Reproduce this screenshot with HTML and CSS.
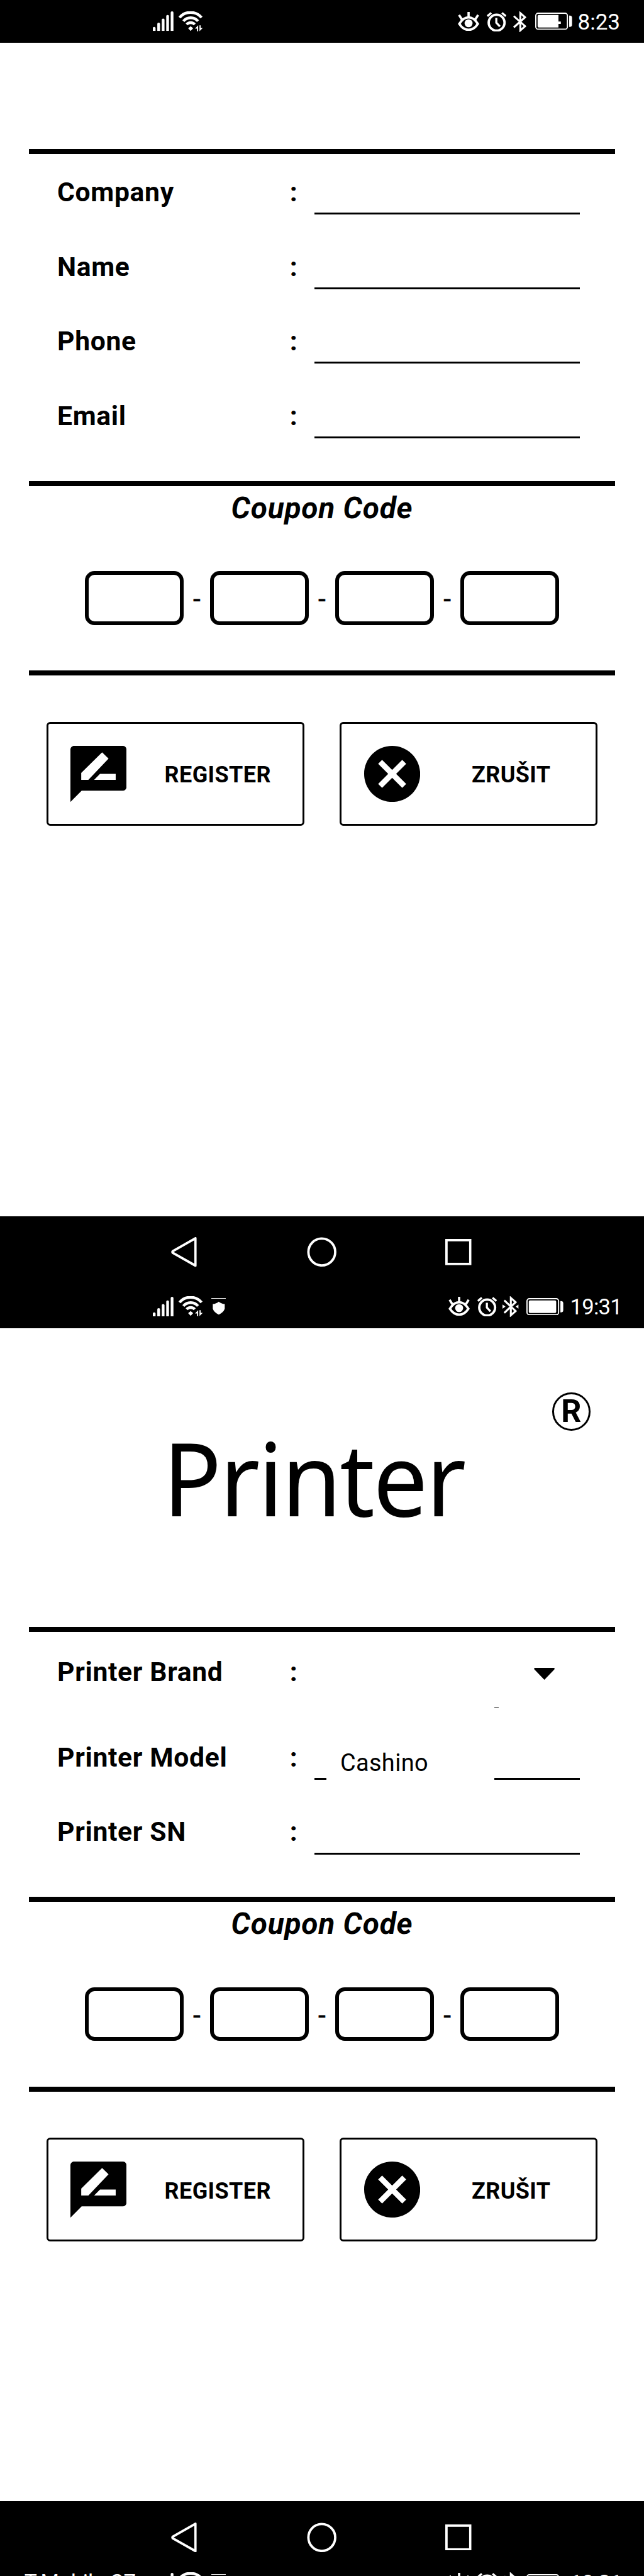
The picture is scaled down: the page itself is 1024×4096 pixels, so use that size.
FILE: index.html
```html
<!DOCTYPE html>
<html lang="cs">
<head>
<meta charset="utf-8">
<title>Printer registration</title>
<link rel="stylesheet" href="styles.css">
</head>
<body>
<svg class="defs" width="0" height="0">
  <symbol id="signal" viewBox="0 0 35 33"><path fill="#fff" d="M0 28q0-2 2.3-2t2.3 2v5H0zM7.5 21q0-2 2.3-2t2.3 2v12H7.500zM15 14q0-2 2.300-2t2.300 2v19H15zM22.500 8q0-2 2.300-2t2.300 2v25h-4.600zM30 2q0-2 2.300-2t2.300 2v31H30z"/></symbol>
  <symbol id="wifi" viewBox="0 0 41 34"><g fill="none" stroke="#fff" stroke-width="4.600"><path d="M1.500 10.500a24 24 0 0 1 37 0"/><path d="M8 16.500a16 16 0 0 1 24.500 0"/><path d="M13.500 22a9 9 0 0 1 13.500 0"/></g><path fill="#fff" d="M16 28.500l4.200-3.500 4.200 3.500-4.200 4.500zM27.500 29l5.300-5.500v10h-2V29zM35 23.500h2V28h3.500L35 33.500z"/></symbol>
  <symbol id="shield" viewBox="0 0 25 28"><path fill="#fff" d="M0 0h25v1H0zM12.500 6q4 3.500 10 4v8q-2 6-10 10-8-4-10-10v-8q6-.5 10-4z"/></symbol>
  <symbol id="eye" viewBox="0 0 36 32"><path fill="none" stroke="#fff" stroke-width="4" d="M2.500 20Q9 9 18 9t15.500 11Q27 30 18 30T2.500 20z"/><circle cx="18" cy="19" r="6.700" fill="#fff"/><path fill="none" stroke="#fff" stroke-width="3.800" d="M18 0v10M2 5l5 8M34 5l-5 8"/></symbol>
  <symbol id="alarm" viewBox="0 0 33 33"><circle cx="16.500" cy="18" r="13.300" fill="none" stroke="#fff" stroke-width="4"/><path fill="none" stroke="#fff" stroke-width="3.500" d="M16 10v8l6 6.500M1 7l6.500-5.500M32 7l-6.500-5.500"/></symbol>
  <symbol id="bluetooth" viewBox="0 0 22 35"><path fill="none" stroke="#fff" stroke-width="3.300" d="M1 8l19 17-8 7V3l8 7L1 27"/></symbol>
  <symbol id="bluetooth-on" viewBox="0 0 27 35"><path fill="none" stroke="#fff" stroke-width="3.300" d="M3 7l19 18-8 7V3l8 7L3 28"/><path fill="#fff" d="M0 14l5 3.500L0 21zM27 14l-5 3.500 5 3.500z"/></symbol>
  <symbol id="battery" viewBox="0 0 62 29"><rect x="1" y="1" width="53" height="27" rx="4" fill="none" stroke="#fff" stroke-width="2"/><rect x="4" y="4" width="46" height="21" rx="2" fill="#fff"/><path fill="#fff" d="M57 5h1q4 0 4 4v11q0 4-4 4h-1z"/></symbol>
  <symbol id="battery-charging" viewBox="0 0 62 29"><rect x="1" y="1" width="53" height="27" rx="4" fill="none" stroke="#fff" stroke-width="2"/><path fill="#fff" d="M6 4h33v11h4v4h-4v6H6q-2 0-2-2V6q0-2 2-2z"/><path fill="#fff" d="M57 5h1q4 0 4 4v11q0 4-4 4h-1z"/></symbol>
  <symbol id="back" viewBox="0 0 43 50"><path fill="none" stroke="#fff" stroke-width="4" stroke-linejoin="round" d="M41 2v46L3 26.500q-1.500-1.500 0-3z"/></symbol>
  <symbol id="home" viewBox="0 0 50 50"><circle cx="25" cy="25" r="22.500" fill="none" stroke="#fff" stroke-width="4"/></symbol>
  <symbol id="recent" viewBox="0 0 44 44"><rect x="2" y="2" width="40" height="40" fill="none" stroke="#fff" stroke-width="4"/></symbol>
  <symbol id="review" viewBox="2 2 20 20"><path fill="#000" fill-rule="evenodd" d="M20.700 2H3.300C2.600 2 2 2.600 2 3.300V22l4-4h14.700c.7 0 1.300-.6 1.300-1.300V3.300C22 2.600 21.400 2 20.700 2zM5.850 14.100v-2.450l7.450-7.350 2.300 2.250L8.400 14.100zm12.300 0h-7.700l2.100-2.100h5.600z"/></symbol>
  <symbol id="cancel" viewBox="2 2 20 20"><path fill="#000" d="M12 2C6.470 2 2 6.470 2 12s4.470 10 10 10 10-4.470 10-10S17.530 2 12 2zm5 13.590L15.590 17 12 13.410 8.410 17 7 15.590 10.590 12 7 8.410 8.410 7 12 10.590 15.590 7 17 8.410 13.410 12 17 15.590z"/></symbol>
</svg>

<main class="device">
  <section class="screen">
    <header class="status">
      <svg class="i-signal"><use href="#signal"/></svg>
      <svg class="i-wifi"><use href="#wifi"/></svg>
      <div class="status-right">
        <svg class="i-eye"><use href="#eye"/></svg>
        <svg class="i-alarm"><use href="#alarm"/></svg>
        <svg class="i-bt"><use href="#bluetooth"/></svg>
        <svg class="i-battery wide-gap"><use href="#battery-charging"/></svg>
        <span class="time time-short">8:23</span>
      </div>
    </header>
    <div class="content content-contact">
      <div class="form">
        <div class="row"><span class="label">Company</span><span class="colon">:</span><span class="field"></span></div>
        <div class="row"><span class="label">Name</span><span class="colon">:</span><span class="field"></span></div>
        <div class="row"><span class="label">Phone</span><span class="colon">:</span><span class="field"></span></div>
        <div class="row"><span class="label">Email</span><span class="colon">:</span><span class="field"></span></div>
      </div>
      <div class="coupon">
        <h2 class="coupon-title">Coupon Code</h2>
        <div class="code"><span class="box"></span><span class="dash">-</span><span class="box"></span><span class="dash">-</span><span class="box"></span><span class="dash">-</span><span class="box"></span></div>
      </div>
      <div class="actions">
        <div class="button"><svg class="i-action"><use href="#review"/></svg><span class="caption">REGISTER</span></div>
        <div class="button"><svg class="i-action"><use href="#cancel"/></svg><span class="caption">ZRUŠIT</span></div>
      </div>
    </div>
    <nav class="nav"><svg class="i-back"><use href="#back"/></svg><svg class="i-home"><use href="#home"/></svg><svg class="i-recent"><use href="#recent"/></svg></nav>
  </section>

  <section class="screen">
    <header class="status">
      <svg class="i-signal"><use href="#signal"/></svg>
      <svg class="i-wifi"><use href="#wifi"/></svg>
      <svg class="i-shield"><use href="#shield"/></svg>
      <div class="status-right">
        <svg class="i-eye"><use href="#eye"/></svg>
        <svg class="i-alarm"><use href="#alarm"/></svg>
        <svg class="i-bt-on"><use href="#bluetooth-on"/></svg>
        <svg class="i-battery"><use href="#battery"/></svg>
        <span class="time">19:31</span>
      </div>
    </header>
    <div class="content content-printer">
      <div class="brand">
        <h1 class="brand-name">Printer</h1>
        <span class="registered">R</span>
      </div>
      <div class="form form-printer">
        <div class="row row-brand"><span class="label">Printer Brand</span><span class="colon">:</span><span class="select"><svg class="i-caret" viewBox="0 0 35 20"><path d="M1.500 0h32q2.500 1 0 3.500L17.500 20 1.500 3.500q-2.500-2.500 0-3.500z"/></svg><span class="tick"></span></span></div>
        <div class="row"><span class="label">Printer Model</span><span class="colon">:</span><span class="field field-model"><span class="model">Cashino</span></span></div>
        <div class="row"><span class="label">Printer SN</span><span class="colon">:</span><span class="field"></span></div>
      </div>
      <div class="coupon">
        <h2 class="coupon-title">Coupon Code</h2>
        <div class="code"><span class="box"></span><span class="dash">-</span><span class="box"></span><span class="dash">-</span><span class="box"></span><span class="dash">-</span><span class="box"></span></div>
      </div>
      <div class="actions">
        <div class="button"><svg class="i-action"><use href="#review"/></svg><span class="caption">REGISTER</span></div>
        <div class="button"><svg class="i-action"><use href="#cancel"/></svg><span class="caption">ZRUŠIT</span></div>
      </div>
    </div>
    <nav class="nav nav-short"><svg class="i-back"><use href="#back"/></svg><svg class="i-home"><use href="#home"/></svg><svg class="i-recent"><use href="#recent"/></svg></nav>
  </section>

  <header class="status status-cut">
    <span class="carrier">T-Mobile CZ</span>
    <svg class="i-signal"><use href="#signal"/></svg>
    <svg class="i-wifi"><use href="#wifi"/></svg>
    <svg class="i-shield"><use href="#shield"/></svg>
    <div class="status-right">
      <svg class="i-eye"><use href="#eye"/></svg>
      <svg class="i-alarm"><use href="#alarm"/></svg>
      <svg class="i-bt-on"><use href="#bluetooth-on"/></svg>
      <svg class="i-battery"><use href="#battery"/></svg>
      <span class="time">19:31</span>
    </div>
  </header>
</main>
</body>
</html>
```
FILE: styles.css
```css
/* 1rem is 100 device pixels on a 1080-pixel-wide phone */
html { font-size: calc(100vw / 10.8); }
* { box-sizing: border-box; }
body { margin: 0; background: #fff; color: #000; font-family: Roboto, sans-serif; overflow: hidden; }
h1, h2 { margin: 0; }
svg { display: block; flex: none; }
.defs { position: absolute; }
.device { width: 10.8rem; height: 43.2rem; overflow: hidden; }

.status { display: flex; align-items: center; height: .72rem; padding-left: 2.56rem; background: #000; color: #fff; }
.status-right { display: flex; align-items: center; margin-left: auto; padding-right: .37rem; }
.i-signal { width: .35rem; height: .33rem; margin-right: .09rem; }
.i-wifi { width: .41rem; height: .34rem; }
.i-shield { width: .25rem; height: .28rem; margin-left: .13rem; }
.i-eye { width: .36rem; height: .32rem; margin-right: .12rem; }
.i-alarm { width: .33rem; height: .33rem; margin-right: .1rem; }
.i-bt { width: .22rem; height: .35rem; margin-left: .02rem; }
.i-bt-on { width: .27rem; height: .35rem; }
.i-battery { width: .62rem; height: .29rem; margin-left: .13rem; }
.i-battery.wide-gap { margin-left: .145rem; }
.time { width: .98rem; font-size: .365rem; line-height: .72rem; letter-spacing: -.008rem; text-align: right; margin-top: .02rem; }
.time-short { width: .835rem; padding-right: .03rem; font-size: .37rem; letter-spacing: 0; }

.content { height: 19.68rem; background: #fff; }
.content-contact { padding-top: 1.78rem; }
.form { margin: 0 .48rem; padding: 0 .48rem .48rem; border-top: .09rem solid #000; }
.form-printer { padding-top: .03rem; }
.row { display: flex; height: 1.25rem; }
.row-brand { height: 1.43rem; }
.label, .colon { font-size: .45rem; font-weight: 700; line-height: 1.28rem; white-space: nowrap; }
.label { width: 3.89rem; letter-spacing: .007rem; }
.colon { width: .42rem; padding-left: .01rem; }
.field { width: 4.45rem; height: 1.015rem; border-bottom: 3px solid #000; }
.field-model { display: flex; justify-content: space-between; align-items: flex-end; border: 0; }
.field-model::before, .field-model::after { content: ""; height: 3px; background: #000; }
.field-model::before { width: .2rem; }
.field-model::after { width: 1.43rem; }
.model { width: 2.56rem; padding-left: .105rem; font-size: .4rem; line-height: 1.46rem; height: 1.01rem; letter-spacing: .004rem; }
.select { display: flex; flex-direction: column; width: 4.45rem; height: 1.23rem; }
.i-caret { width: .35rem; height: .2rem; margin: .57rem 0 0 3.68rem; }
.tick { width: .07rem; height: 1px; background: #000; margin: .45rem 0 0 3.02rem; }

.coupon { margin: 0 .48rem; height: 3.26rem; border-top: .09rem solid #000; border-bottom: .09rem solid #000; }
.coupon-title { height: 1.43rem; font-size: .505rem; line-height: .75rem; letter-spacing: .008rem; font-style: italic; text-align: center; }
.code { display: flex; justify-content: center; height: .9rem; }
.box { width: 1.65rem; height: .9rem; border: 6px solid #000; border-radius: .16rem; }
.dash { width: .45rem; font-size: .45rem; line-height: .94rem; text-align: center; -webkit-text-stroke: .5px #000; }

.actions { display: flex; gap: .6rem; padding: .78rem .78rem 0; }
.button { display: flex; align-items: center; width: 4.32rem; height: 1.74rem; padding-left: .37rem; border: 3px solid #000; border-radius: .06rem; }
.i-action { width: .94rem; height: .94rem; }
.caption { width: 3.06rem; margin-right: -.1rem; flex: none; padding-top: .04rem; text-align: center; font-size: .38rem; font-weight: 700; line-height: 1; letter-spacing: .004rem; }

.nav { display: flex; align-items: center; height: 1.15rem; padding: .05rem 2.89rem 0 2.87rem; background: #000; }
.i-back { width: .43rem; height: .5rem; }
.i-home { width: .5rem; height: .5rem; margin: 0 1.82rem 0 1.85rem; }
.i-recent { width: .44rem; height: .44rem; }
.nav-short { height: 1rem; padding-top: .2rem; }
.status-cut { padding-left: .41rem; }
.carrier { width: 2.15rem; font-size: .355rem; line-height: .72rem; white-space: nowrap; }

.brand { display: flex; height: 5.02rem; justify-content: space-between; padding: 0 .9rem 0 2.73rem; }
.brand-name { font: 400 1.695rem/2.3rem "Noto Sans", sans-serif; letter-spacing: -.03rem; margin-top: 1.35rem; transform: scaleX(.96); transform-origin: left; }
.registered { display: flex; align-items: center; justify-content: center; width: .64rem; height: .64rem; margin-top: 1.08rem; border: 3px solid #000; border-radius: 50%; font: 700 .53rem/1 Roboto, sans-serif; }
```
